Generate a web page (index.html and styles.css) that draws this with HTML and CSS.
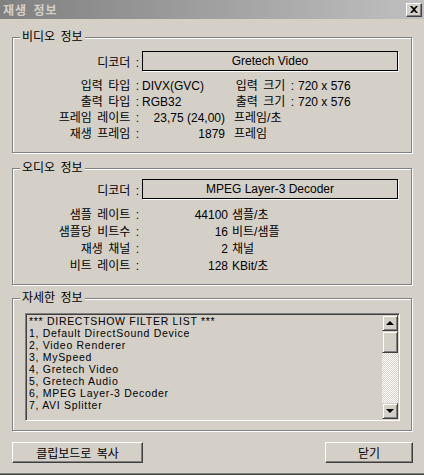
FILE: index.html
```html
<!DOCTYPE html>
<html lang="ko">
<head>
    <meta charset="UTF-8">
    <title>재생 정보</title>
    <link rel="stylesheet" href="styles.css">
</head>
<body>
    <div class="window">
        <div class="titlebar">
            <span class="title">재생 정보</span>
            <span class="close">
                <svg width="8" height="7" viewBox="0 0 8 7"><path d="M0 0h2l2 2 2-2h2L5 3.5 8 7H6L4 5 2 7H0l3-3.5z" fill="#000"/></svg>
            </span>
        </div>

        <div class="content">
            <div class="group video">
                <span class="legend">비디오 정보</span>
                <div class="decoder-row">
                    <span class="lbl">디코더 :</span>
                    <div class="decoder">Gretech Video</div>
                </div>
                <div class="row">
                    <span class="lbl">입력 타입 :</span>
                    <span class="val">DIVX(GVC)</span>
                    <span class="lbl2">입력 크기 :</span>
                    <span class="val2">720 x 576</span>
                </div>
                <div class="row">
                    <span class="lbl">출력 타입 :</span>
                    <span class="val">RGB32</span>
                    <span class="lbl2">출력 크기 :</span>
                    <span class="val2">720 x 576</span>
                </div>
                <div class="row">
                    <span class="lbl">프레임 레이트 :</span>
                    <span class="num">23,75 (24,00)</span>
                    <span class="unit">프레임/초</span>
                </div>
                <div class="row">
                    <span class="lbl">재생 프레임 :</span>
                    <span class="num">1879</span>
                    <span class="unit">프레임</span>
                </div>
            </div>

            <div class="group audio">
                <span class="legend">오디오 정보</span>
                <div class="decoder-row">
                    <span class="lbl">디코더 :</span>
                    <div class="decoder">MPEG Layer-3 Decoder</div>
                </div>
                <div class="row">
                    <span class="lbl">샘플 레이트 :</span>
                    <span class="num">44100</span>
                    <span class="unit">샘플/초</span>
                </div>
                <div class="row">
                    <span class="lbl">샘플당 비트수 :</span>
                    <span class="num">16</span>
                    <span class="unit">비트/샘플</span>
                </div>
                <div class="row">
                    <span class="lbl">재생 채널 :</span>
                    <span class="num">2</span>
                    <span class="unit">채널</span>
                </div>
                <div class="row">
                    <span class="lbl">비트 레이트 :</span>
                    <span class="num">128</span>
                    <span class="unit">KBit/초</span>
                </div>
            </div>

            <div class="group detail">
                <span class="legend">자세한 정보</span>
                <div class="listbox">
                    <div class="list-text">
                        <div>*** DIRECTSHOW FILTER LIST ***</div>
                        <div>1, Default DirectSound Device</div>
                        <div>2, Video Renderer</div>
                        <div>3, MySpeed</div>
                        <div>4, Gretech Video</div>
                        <div>5, Gretech Audio</div>
                        <div>6, MPEG Layer-3 Decoder</div>
                        <div>7, AVI Splitter</div>
                    </div>
                    <div class="scrollbar">
                        <div class="sb-btn"><span class="arrow up"></span></div>
                        <div class="sb-thumb"></div>
                        <div class="sb-track"></div>
                        <div class="sb-btn"><span class="arrow down"></span></div>
                    </div>
                </div>
            </div>

            <div class="buttons">
                <button class="btn copy">클립보드로 복사</button>
                <button class="btn close-btn">닫기</button>
            </div>
        </div>
    </div>
</body>
</html>
```

FILE: styles.css
```css
body {
    margin: 0;
    background: #d4d0c8;
    font-family: "Liberation Sans", "Noto Sans CJK KR", sans-serif;
    font-size: 12px;
    color: #000;
}
.window {
    width: 424px;
    height: 475px;
    box-sizing: border-box;
    background: #d4d0c8;
    border-bottom: 1px solid #404040;
    box-shadow: inset 0 -1px 0 #808080;
}
.titlebar {
    height: 19px;
    display: flex;
    align-items: center;
    justify-content: space-between;
    padding: 0 2px 0 3px;
    background: linear-gradient(to right, #808080, #c0c0c0);
}
.title {
    color: #d4d0c8;
    font-weight: bold;
    font-size: 12px;
    letter-spacing: 1px;
    word-spacing: 2px;
}
.close {
    width: 14px;
    height: 12px;
    display: flex;
    align-items: center;
    justify-content: center;
    background: #d4d0c8;
    border: 1px solid;
    border-color: #fff #404040 #404040 #fff;
    box-shadow: inset -1px -1px 0 #808080;
}
.content {
    padding: 0 12px;
}
.group {
    position: relative;
    border: 1px solid #808080;
    box-shadow: inset 1px 1px 0 #fff, 1px 1px 0 #fff;
}
.legend {
    position: absolute;
    top: -8px;
    left: 7px;
    padding: 0 2px;
    line-height: 14px;
    word-spacing: 2px;
    background: #d4d0c8;
}
.video {
    margin-top: 18px;
    padding: 13px 0 10px;
}
.audio {
    margin-top: 15px;
    padding: 10px 0 9px;
}
.detail {
    margin-top: 13px;
    padding: 14px 11px 9px 12px;
}
.decoder-row {
    display: flex;
    align-items: center;
    height: 20px;
    margin-bottom: 7px;
}
.audio .decoder-row {
    margin-bottom: 8px;
}
.lbl {
    width: 126px;
    text-align: right;
    white-space: nowrap;
    word-spacing: 2px;
}
.decoder {
    margin-left: 3px;
    width: 256px;
    height: 20px;
    box-sizing: border-box;
    border: 1px solid #000;
    box-shadow: 1px 1px 0 #fff;
    text-align: center;
    line-height: 18px;
}
.row {
    display: flex;
    height: 16px;
    line-height: 16px;
    white-space: nowrap;
}
.audio .row {
    height: 17px;
    line-height: 17px;
}
.val {
    margin-left: 3px;
    width: 88px;
}
.lbl2 {
    width: 64px;
    text-align: right;
    word-spacing: 2px;
}
.val2 {
    margin-left: 4px;
}
.num {
    margin-left: 3px;
    width: 83px;
    text-align: right;
}
.unit {
    margin-left: 9px;
}
.audio .num {
    width: 86px;
}
.audio .unit {
    margin-left: 4px;
}
.listbox {
    display: flex;
    height: 108px;
    box-sizing: border-box;
    border: 1px solid;
    border-color: #808080 #fff #fff #808080;
    box-shadow: inset 1px 1px 0 #404040, inset -1px -1px 0 #d4d0c8;
    padding: 1px;
}
.list-text {
    flex: 1;
    padding: 0 2px;
    font-size: 10.5px;
    letter-spacing: 0.7px;
    line-height: 12px;
    white-space: nowrap;
    overflow: hidden;
}
.scrollbar {
    width: 16px;
    display: flex;
    flex-direction: column;
}
.sb-btn,
.sb-thumb {
    box-sizing: border-box;
    background: #d4d0c8;
    border: 1px solid;
    border-color: #d4d0c8 #404040 #404040 #d4d0c8;
    box-shadow: inset 1px 1px 0 #fff, inset -1px -1px 0 #808080;
}
.sb-btn {
    height: 16px;
    display: flex;
    align-items: center;
    justify-content: center;
}
.sb-thumb {
    height: 22px;
}
.sb-track {
    flex: 1;
    background-image: repeating-conic-gradient(#fff 0 25%, #d4d0c8 0 50%);
    background-size: 2px 2px;
}
.arrow {
    width: 0;
    height: 0;
    border-left: 4px solid transparent;
    border-right: 4px solid transparent;
}
.arrow.up {
    border-bottom: 4px solid #000;
}
.arrow.down {
    border-top: 4px solid #000;
}
.buttons {
    margin-top: 11px;
    display: flex;
    justify-content: space-between;
}
.btn {
    height: 21px;
    padding: 0;
    font-family: "Liberation Sans", "Noto Sans CJK KR", sans-serif;
    font-size: 12px;
    word-spacing: 2px;
    color: #000;
    background: #d4d0c8;
    border: 1px solid;
    border-color: #fff #404040 #404040 #fff;
    box-shadow: inset -1px -1px 0 #808080;
    border-radius: 0;
}
.copy {
    width: 131px;
}
.close-btn {
    width: 88px;
    margin-right: -1px;
}
```
